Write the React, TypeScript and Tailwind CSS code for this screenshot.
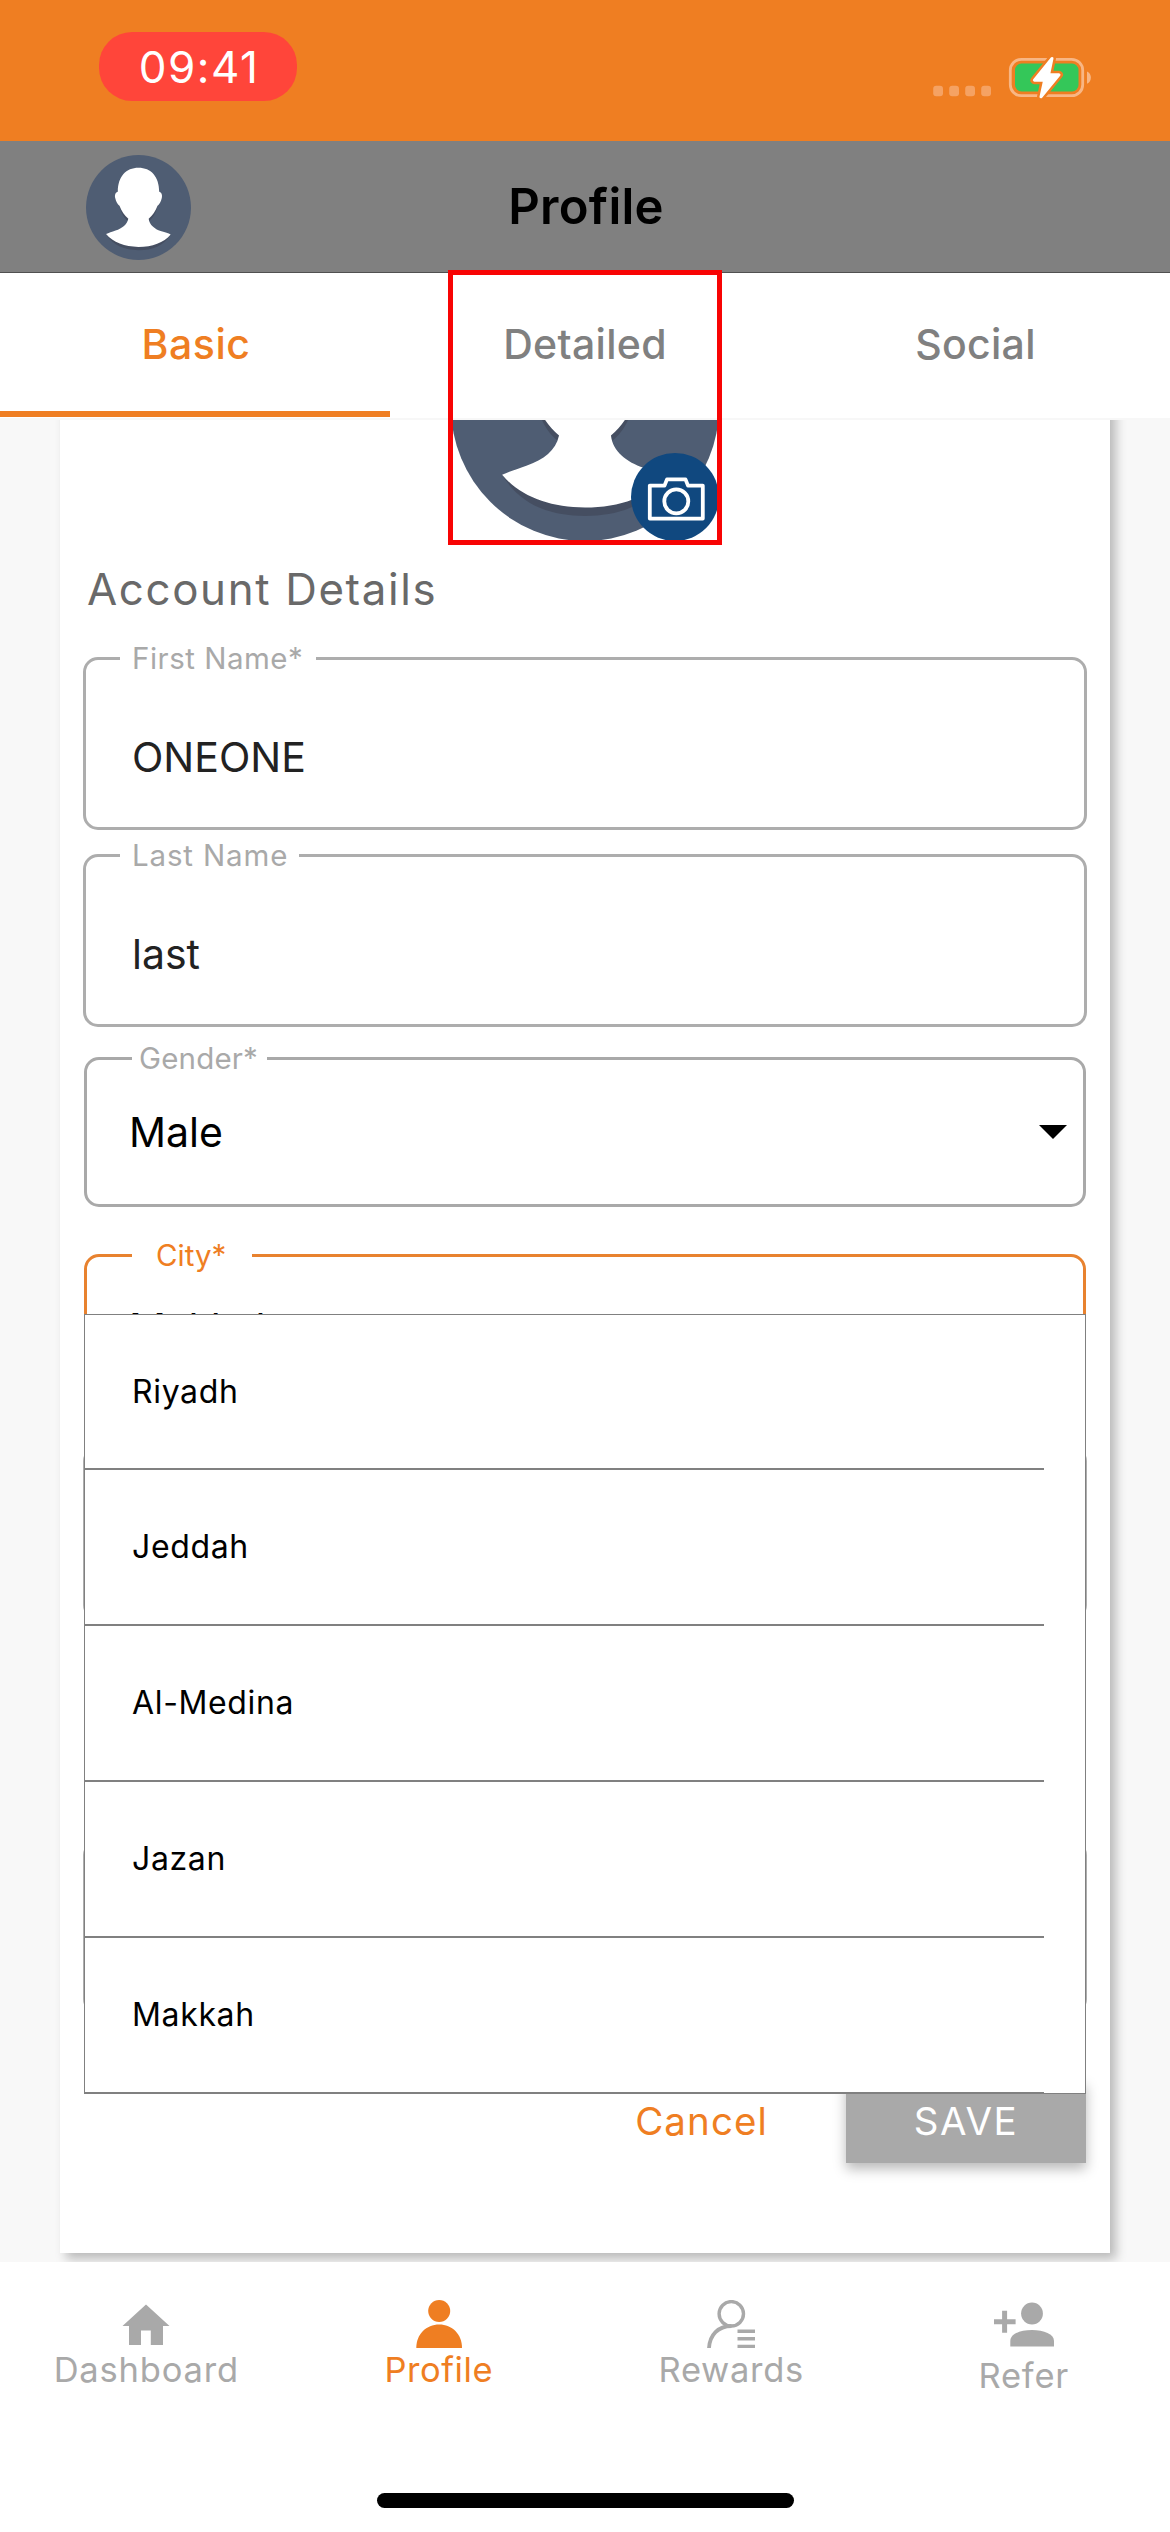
import React from 'react';

const CITIES = ['Riyadh', 'Jeddah', 'Al-Medina', 'Jazan', 'Makkah'];

function StatusIcons() {
  return (
    <svg width="158" height="42" viewBox="933 57 158 42" fill="none" className="overflow-visible">
      {[933.2, 949.2, 965.2, 981.2].map((x) => (
        <rect key={x} x={x} y="85.8" width="9.8" height="10.4" rx="3" fill="#f5a263" />
      ))}
      <rect x="1010.3" y="59.3" width="72.4" height="36.4" rx="11" stroke="#f8b684" strokeWidth="2.8" />
      <path d="M1087 71.5c5.2 2.2 5.2 10 0 12.2z" fill="#f8b684" />
      <rect x="1015" y="63.5" width="63.5" height="28" rx="6.5" fill="#34c759" />
      <path
        d="M1052 58.4 L1034.4 80.2 H1044.6 L1041 96.8 L1059 74.8 H1048.6 Z"
        fill="#ef7e22"
        stroke="#ef7e22"
        strokeWidth="8"
        strokeLinejoin="round"
      />
      <path
        d="M1052 58.4 L1034.4 80.2 H1044.6 L1041 96.8 L1059 74.8 H1048.6 Z"
        fill="#fff"
        stroke="#fff"
        strokeWidth="3"
        strokeLinejoin="round"
      />
    </svg>
  );
}

function Avatar({ size }: { size: number }) {
  const bust =
    'M32 7.8C39.6 7.8 44.6 13.2 44.6 22.4C46.2 22.8 46.6 24.6 46.2 26.2C45.6 28.6 44.8 30 43.6 31C42.4 34.2 40.6 36.8 38.2 38.8C38.6 42.6 42 45.2 46 46.5C48.2 47.1 50.2 47.7 51.6 48.4C47.4 53.4 40.4 56 32 56C23.6 56 16.6 53.4 12.2 48.2C13.8 47.4 15.8 46.8 18 46C22.2 44.6 25 42.4 25.8 38.8C23.4 36.8 21.6 34.2 20.4 31C19.2 30 18.4 28.6 17.8 26.2C17.4 24.6 17.8 22.8 19.4 22.4C19.4 13.2 24.4 7.8 32 7.8Z';
  return (
    <svg width={size} height={size} viewBox="0 0 64 64" className="block">
      <circle cx="32" cy="32" r="32" fill="#4f5d73" />
      <path d="M12.2 48.2C16.6 55.4 23.6 58 32 58S47.4 55.4 51.6 48.4L32 46Z" fill="#454e61" />
      <path d="M20.2 30.4C21.4 35.8 23.4 38.4 25.4 40L27 36ZM43.8 30.4C42.6 35.8 40.6 38.4 38.6 40L37 36Z" fill="#454e61" />
      <path d={bust} fill="#fff" />
    </svg>
  );
}

function CameraBadge() {
  return (
    <svg width="88" height="88" viewBox="0 0 88 88" className="block">
      <circle cx="44" cy="44" r="44" fill="#10487f" />
      <g fill="none" stroke="#fff" strokeWidth="3.8" strokeLinejoin="round">
        <path d="M19.5 32.6H33.5L36 26.4H54.5L57 32.6H71.8V65.6H18.8V32.6Z" />
        <circle cx="45.3" cy="48.4" r="12" />
      </g>
    </svg>
  );
}

function TextField({ label, value, notch, className }: { label?: string; value?: string; notch?: string; className: string }) {
  return (
    <div className={`relative ml-[23px] flex w-[1004px] items-center rounded-[15px] border-[3px] border-[#adadad] pl-[46px] ${className}`}>
      {label && (
        <span className={`absolute -top-5 left-[34px] h-9 bg-white pl-3 text-[29.5px] leading-9 text-[#a9a9a9] ${notch}`}>
          {label}
        </span>
      )}
      {value && <span className="mt-[26px] text-[41px] leading-[50px] text-[#222]">{value}</span>}
    </div>
  );
}

function HomeIcon() {
  return (
    <svg width="48" height="48" viewBox="0 0 48 48" fill="#a9a9a9">
      <path d="M24 4.5L47.5 26H41V45H28.8V30.5H19V45H7V26H0.5Z" />
    </svg>
  );
}

function ProfileIcon() {
  return (
    <svg width="48" height="48" viewBox="0 0 48 48" fill="#ef7e22">
      <circle cx="24.2" cy="11" r="11" />
      <path d="M1.3 48C1.3 34.2 11.3 24.6 24.2 24.6S47 34.2 47 48Z" />
    </svg>
  );
}

function RewardsIcon() {
  return (
    <svg width="48" height="48" viewBox="0 0 48 48" fill="none" stroke="#a9a9a9">
      <circle cx="24.3" cy="13.8" r="12.2" strokeWidth="3.4" />
      <path d="M2 48C2.8 35 11 26 24.5 26" strokeWidth="3.8" />
      <path d="M30.5 31.2H48M30.5 38.8H48M30.5 46.4H48" strokeWidth="3.4" />
    </svg>
  );
}

function ReferIcon() {
  return (
    <svg width="60" height="48" viewBox="0 0 60 48" fill="#a9a9a9">
      <path d="M8.1 10.7H13.1V19.2H21.6V24.2H13.1V32.7H8.1V24.2H0V19.2H8.1Z" />
      <circle cx="38" cy="13.5" r="10.9" />
      <path d="M16.3 46.4V41C16.3 34 26 30 38 30S60 34 60 41V46.4Z" />
    </svg>
  );
}

const NAV = [
  { label: 'Dashboard', icon: <HomeIcon />, text: 'text-[#a9a9a9] tracking-[0.8px]' },
  { label: 'Profile', icon: <ProfileIcon />, text: 'text-[#ef7e22] tracking-[0.56px]' },
  { label: 'Rewards', icon: <RewardsIcon />, text: 'text-[#a9a9a9] tracking-[0.7px]' },
  { label: 'Refer', icon: <ReferIcon />, text: 'text-[#a9a9a9] tracking-[0.8px] mt-[6px]' },
];

export default function App() {
  return (
    <div className="relative flex h-[2532px] w-[1170px] flex-col overflow-hidden bg-white font-['Inter',sans-serif]">
      <div className="flex h-[141px] shrink-0 items-start justify-between bg-[#ef7e22] pr-[79px] pl-[99px]">
        <div className="mt-8 flex h-[69px] w-[198px] items-center justify-center rounded-[33px] bg-[#ff453a] pl-[2px] text-[44px] tracking-[1.5px] text-white">
          09:41
        </div>
        <div className="mt-[57px]">
          <StatusIcons />
        </div>
      </div>

      <header className="relative flex h-[132px] shrink-0 items-center justify-center border-b border-[#505050] bg-[#808080] pl-[2px]">
        <div className="absolute top-[14px] left-[86px]">
          <Avatar size={105} />
        </div>
        <h1 className="text-[49px] font-semibold tracking-[0.28px] text-black">Profile</h1>
      </header>

      <nav className="grid h-[147px] shrink-0 grid-cols-3 border-b-2 border-[#f7f7f7] text-[41px] font-medium text-[#808080]">
        <div className="flex h-[144px] items-center justify-center border-b-[6px] border-[#ef7e22] pt-[6px] pl-[2px] tracking-[0.59px] text-[#ef7e22]">Basic</div>
        <div className="flex h-[144px] items-center justify-center tracking-[0.31px]">Detailed</div>
        <div className="flex h-[144px] items-center justify-center pl-[1px] tracking-[0.29px]">Social</div>
      </nav>

      <main className="h-[1842px] shrink-0 overflow-hidden bg-[#f8f8f8]">
        <section className="mx-[60px] -mt-[147px] h-[1980px] bg-white shadow-[6px_6px_10px_rgba(0,0,0,0.25)]">
          <div className="relative mx-auto h-[268px] w-[268px]">
            <Avatar size={268} />
            <div className="absolute right-0 bottom-0">
              <CameraBadge />
            </div>
          </div>

          <h2 className="mt-[19px] pl-[27px] text-[43.8px] leading-[60px] tracking-[1.65px] text-[#696969]">Account Details</h2>

          <TextField label="First Name*" value="ONEONE" notch="w-[196px] tracking-[0.5px]" className="mt-[37px] h-[173px]" />
          <TextField label="Last Name" value="last" notch="w-[179px] tracking-[0.85px]" className="mt-6 h-[173px]" />

          <div className="relative mt-[30px] ml-6 flex h-[150px] w-[1002px] items-center justify-between rounded-[15px] border-[3px] border-[#a9a9a9] pr-4 pl-[42px]">
            <span className="absolute -top-5 left-[45px] h-9 w-[135px] bg-white pl-[7px] text-[29.5px] leading-9 tracking-[0.17px] text-[#a9a9a9]">Gender*</span>
            <span className="text-[41px] leading-[50px] text-black">Male</span>
            <svg width="28" height="14" viewBox="0 0 28 14">
              <path d="M0 0H28L14 14Z" fill="#000" />
            </svg>
          </div>

          <div className="relative z-10 mt-[47px] ml-6 flex h-[150px] w-[1002px] items-center rounded-[15px] border-[3px] border-[#e8822f] pl-[42px]">
            <span className="absolute -top-5 left-[45px] h-9 w-[120px] bg-white pl-6 text-[29.5px] leading-9 text-[#ef7e22]">City*</span>
            <span className="mb-[2px] text-[41px] leading-[50px] tracking-[-0.3px] text-black">Makkah</span>
            <ul className="absolute top-[57px] -left-[3px] h-[780px] w-[1002px] border border-[#808080] bg-white text-[32px] text-black">
              {CITIES.map((city) => (
                <li key={city} className="flex h-[156px] w-[959px] items-center border-b-2 border-[#808080] pl-[47px] tracking-[0.65px] first:h-[155px]">
                  {city}
                </li>
              ))}
            </ul>
          </div>

          <TextField className="mt-[42px] h-[174px]" />
          <TextField className="mt-[220px] h-[174px]" />

          <div className="mt-[66px] mr-6 flex justify-end">
            <button className="h-[83px] pr-[78px] text-[38.5px] tracking-[1.1px] text-[#ef7e22]">Cancel</button>
            <button className="h-[83px] w-[240px] bg-[#a9a9a9] text-[38.5px] tracking-[1.6px] text-white shadow-[0_6px_12px_rgba(0,0,0,0.28)]">SAVE</button>
          </div>
        </section>
      </main>

      <footer className="grid h-[231px] shrink-0 grid-cols-4 pt-[38px]">
        {NAV.map((item) => (
          <div key={item.label} className="flex flex-col items-center">
            {item.icon}
            <span className={`text-[34.5px] leading-[44px] ${item.text}`}>{item.label}</span>
          </div>
        ))}
      </footer>
      <div className="mx-auto h-[15px] w-[417px] shrink-0 rounded-full bg-black" />

      <div className="pointer-events-none absolute top-[270px] left-[448px] z-20 h-[275px] w-[274px] border-[5px] border-[#f80404]" />
    </div>
  );
}
